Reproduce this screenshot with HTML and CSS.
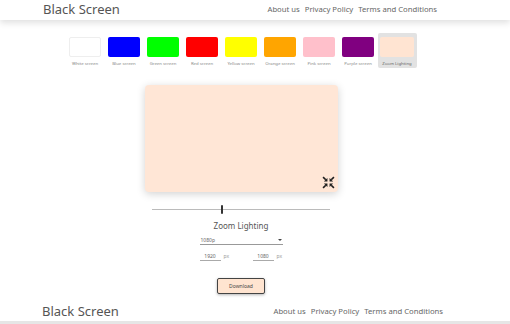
FILE: index.html
```html
<!DOCTYPE html>
<html>
<head>
    <title>Black Screen</title>
    <link rel="stylesheet" href="styles.css">
</head>
<body>
<div class="topbar">
    <div class="bar-inner">
        <span class="brand">Black Screen</span>
        <nav class="nav">
            <a href="#">About us</a>
            <a href="#">Privacy Policy</a>
            <a href="#">Terms and Conditions</a>
        </nav>
    </div>
</div>

<div class="main">
    <div class="palette">
        <div class="item"><div class="swatch white"></div><span>White screen</span></div>
        <div class="item"><div class="swatch blue"></div><span>Blue screen</span></div>
        <div class="item"><div class="swatch green"></div><span>Green screen</span></div>
        <div class="item"><div class="swatch red"></div><span>Red screen</span></div>
        <div class="item"><div class="swatch yellow"></div><span>Yellow screen</span></div>
        <div class="item"><div class="swatch orange"></div><span>Orange screen</span></div>
        <div class="item"><div class="swatch pink"></div><span>Pink screen</span></div>
        <div class="item"><div class="swatch purple"></div><span>Purple screen</span></div>
        <div class="item active"><div class="swatch peach"></div><span>Zoom Lighting</span></div>
    </div>

    <div class="preview">
        <svg class="fs-icon" viewBox="0 0 24 24" width="13" height="13">
            <g stroke="#1e1e1e" stroke-width="3" fill="#1e1e1e">
                <line x1="2" y1="2" x2="7" y2="7"/>
                <polygon points="10,10 10,3.5 3.5,10" stroke="none"/>
                <line x1="22" y1="2" x2="17" y2="7"/>
                <polygon points="14,10 14,3.5 20.5,10" stroke="none"/>
                <line x1="2" y1="22" x2="7" y2="17"/>
                <polygon points="10,14 10,20.5 3.5,14" stroke="none"/>
                <line x1="22" y1="22" x2="17" y2="17"/>
                <polygon points="14,14 14,20.5 20.5,14" stroke="none"/>
            </g>
        </svg>
    </div>

    <input class="slider" type="range" min="0" max="100" value="39">

    <div class="title">Zoom Lighting</div>

    <div class="select">
        <span>1080p</span>
        <span class="caret"></span>
    </div>

    <div class="sizes">
        <div class="size"><span class="num">1920</span><span class="unit">px</span></div>
        <div class="size"><span class="num">1080</span><span class="unit">px</span></div>
    </div>

    <button class="download">Download</button>
</div>

<div class="footer">
    <div class="bar-inner foot-inner">
        <span class="brand">Black Screen</span>
        <nav class="nav">
            <a href="#">About us</a>
            <a href="#">Privacy Policy</a>
            <a href="#">Terms and Conditions</a>
        </nav>
    </div>
</div>
</body>
</html>
```

FILE: styles.css
```css
body {
    margin: 0;
    font-family: "Noto Sans", sans-serif;
    color: #555;
    background: #fff;
}
.topbar {
    height: 20px;
    box-shadow: 0 3px 6px rgba(0, 0, 0, 0.12);
}
.bar-inner {
    height: 18px;
    width: 394px;
    margin-left: 43px;
    display: flex;
    justify-content: space-between;
    align-items: center;
}
.brand {
    font-size: 13px;
    color: #555;
    line-height: 1;
}
.nav {
    display: flex;
    gap: 5px;
    font-size: 7.7px;
}
.nav a {
    color: #666;
    text-decoration: none;
}

.main {
    width: 482px;
    display: flex;
    flex-direction: column;
    align-items: center;
}
.palette {
    display: flex;
    margin-top: 13px;
}
.item {
    width: 39px;
    height: 35px;
    box-sizing: border-box;
    padding-top: 4px;
    display: flex;
    flex-direction: column;
    align-items: center;
    border-radius: 2px;
}
.item span {
    font-size: 4.3px;
    color: #888;
    margin-top: 3px;
    white-space: nowrap;
}
.item.active { background: #e2e2e2; }
.item.active span { color: #666; }
.swatch {
    width: 32px;
    height: 20px;
    border-radius: 2px;
    box-sizing: border-box;
}
.white { background: #fff; border: 1px solid #eee; }
.blue { background: #0000ff; }
.green { background: #00ff00; }
.red { background: #ff0000; }
.yellow { background: #ffff00; }
.orange { background: #ffa500; }
.pink { background: #ffc0cb; }
.purple { background: #800080; }
.peach { background: #ffe4d2; width: 34px; }

.preview {
    width: 193px;
    height: 107px;
    margin-top: 17px;
    background: #ffe6d6;
    border-radius: 4px;
    box-shadow: 0 2px 8px rgba(0, 0, 0, 0.18);
    display: flex;
    justify-content: flex-end;
    align-items: flex-end;
}
.fs-icon {
    margin: 0 3px 3px 0;
}

.slider {
    -webkit-appearance: none;
    appearance: none;
    width: 178px;
    height: 1px;
    margin: 17px 0 0;
    background: #bbb;
    outline: none;
}
.slider::-webkit-slider-thumb {
    -webkit-appearance: none;
    width: 2px;
    height: 9px;
    background: #333;
    border-radius: 1px;
}

.title {
    font-size: 8px;
    margin-top: 10px;
    color: #555;
}

.select {
    width: 83px;
    margin-top: 6px;
    display: flex;
    justify-content: space-between;
    align-items: center;
    font-size: 5px;
    color: #666;
    border-bottom: 1px solid #999;
    padding: 0 1px 1px;
    box-sizing: border-box;
}
.caret {
    width: 0;
    height: 0;
    border-left: 2px solid transparent;
    border-right: 2px solid transparent;
    border-top: 2.5px solid #444;
}

.sizes {
    display: flex;
    gap: 23px;
    margin-top: 8px;
}
.size {
    display: flex;
    align-items: center;
    gap: 3px;
    font-size: 5px;
}
.num {
    width: 21px;
    text-align: center;
    color: #666;
    border-bottom: 1px solid #aaa;
    padding-bottom: 1px;
}
.unit {
    width: 6px;
    color: #999;
    margin-bottom: 2px;
}

.download {
    margin-top: 17px;
    width: 48px;
    height: 16px;
    background: #ffe4d0;
    border: 1.5px solid #444;
    border-radius: 2px;
    font-family: "Noto Sans", sans-serif;
    font-size: 5px;
    color: #444;
    box-shadow: 0 1px 3px rgba(0, 0, 0, 0.3);
    padding: 0;
}

.footer {
    margin-top: 8px;
    padding-bottom: 1px;
    border-bottom: 4px solid #e6e6e6;
}
.foot-inner {
    margin-left: 42px;
    width: 401px;
}
```
